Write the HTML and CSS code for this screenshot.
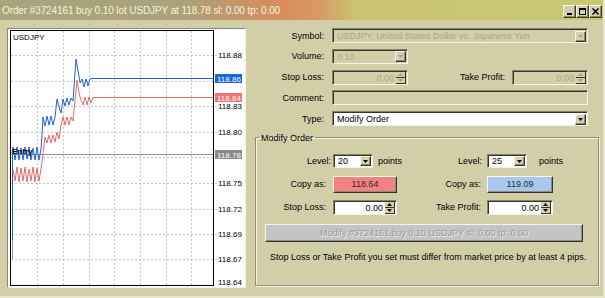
FILE: index.html
```html
<!DOCTYPE html>
<html lang="en">
<head>
    <meta charset="UTF-8">
    <meta name="viewport" content="width=device-width, initial-scale=1.0">
    <title>Order #3724161</title>
    <link rel="stylesheet" href="styles.css">
</head>
<body>
<div class="window">
    <div class="titlebar">
        <span class="title">Order #3724161 buy 0.10 lot USDJPY at 118.78 sl: 0.00 tp: 0.00</span>
        <div class="caption-buttons">
            <span class="cap-btn"><svg width="7" height="7" viewBox="0 0 7 7"><rect x="1" y="5" width="5" height="2" fill="#000"/></svg></span>
            <span class="cap-btn"><svg width="7" height="7" viewBox="0 0 7 7"><rect x="0.5" y="0.5" width="6" height="6" fill="none" stroke="#000"/><rect x="0" y="0" width="7" height="2" fill="#000"/></svg></span>
            <span class="cap-btn"><svg width="7" height="7" viewBox="0 0 7 7"><path d="M0.5 0.5 L6.5 6.5 M6.5 0.5 L0.5 6.5" stroke="#000" stroke-width="1.5"/></svg></span>
        </div>
    </div>

    <div class="client">
        <!-- chart -->
        <div class="chart-panel">
            <svg width="237" height="258" viewBox="0 0 237 258">
                <g stroke="#c6c6c6" stroke-dasharray="2 2" stroke-width="1">
                    <line x1="29.5" y1="2" x2="29.5" y2="256"/>
                    <line x1="55.5" y1="2" x2="55.5" y2="256"/>
                    <line x1="81.5" y1="2" x2="81.5" y2="256"/>
                    <line x1="106.5" y1="2" x2="106.5" y2="256"/>
                    <line x1="132.5" y1="2" x2="132.5" y2="256"/>
                    <line x1="158.5" y1="2" x2="158.5" y2="256"/>
                    <line x1="183.5" y1="2" x2="183.5" y2="256"/>
                    <line x1="3" y1="26.5" x2="209" y2="26.5"/>
                    <line x1="3" y1="52.5" x2="209" y2="52.5"/>
                    <line x1="3" y1="77.5" x2="209" y2="77.5"/>
                    <line x1="3" y1="103.5" x2="209" y2="103.5"/>
                    <line x1="3" y1="128.5" x2="209" y2="128.5"/>
                    <line x1="3" y1="154.5" x2="209" y2="154.5"/>
                    <line x1="3" y1="180.5" x2="209" y2="180.5"/>
                    <line x1="3" y1="205.5" x2="209" y2="205.5"/>
                    <line x1="3" y1="230.5" x2="209" y2="230.5"/>
                </g>
                <rect x="2.5" y="1.5" width="203" height="255" fill="none" stroke="#000"/>

                <text class="sym" x="5" y="11">USDJPY</text>

                <g class="axis">
                    <text x="210" y="29">118.88</text>
                    <text x="210" y="80">118.83</text>
                    <text x="210" y="106">118.80</text>
                    <text x="210" y="157">118.75</text>
                    <text x="210" y="183">118.72</text>
                    <text x="210" y="208">118.69</text>
                    <text x="210" y="233">118.67</text>
                    <text x="210" y="256">118.64</text>
                </g>

                <line x1="4.5" y1="124" x2="4.5" y2="211" stroke="#2a5cc8"/>
                <line x1="4.5" y1="211" x2="4.5" y2="230" stroke="#9a9a9a"/>

                <line x1="3" y1="125.5" x2="205" y2="125.5" stroke="#8c8c8c"/>

                <polyline fill="none" stroke="#e06c6c" points="5,140 7,152 9,138 11,153 13,139 15,152 17,138 19,153 21,140 23,152 25,138 27,153 29,139 31,152 33,140 35,125 37,108 39,114 41,106 43,114 45,106 47,113 49,103 51,110 53,96 55,88 57,96 59,88 61,96 63,88 65,92 69,51 71,64 73,71 75,76 77,68 79,76 81,68 83,74 85,68.5 205,68.5"/>
                <polyline fill="none" stroke="#2262d4" points="4,124 5,118 7,131 9,118 11,131 13,119 15,131 17,118 19,130 21,118 23,131 25,119 27,131 29,118 31,131 33,120 34,106 35,88 37,97 39,87 41,96 43,87 45,96 47,88 49,70 51,78 53,84 55,70 57,77 59,69 61,76 63,69 65,72 68,30 70,42 72,54 74,50 76,58 78,50 80,57 82,50 84,49.5 205,49.5"/>

                <text class="entry" x="4" y="125">Entry</text>

                <rect x="207" y="45" width="27" height="9" fill="#1a66dc"/>
                <text class="tag" x="209" y="53">118.86</text>
                <rect x="207" y="64" width="27" height="9" fill="#ee7474"/>
                <text class="tag" x="209" y="72">118.84</text>
                <rect x="207" y="121" width="27" height="9" fill="#8a8a8a"/>
                <text class="tag" x="209" y="129">118.78</text>
            </svg>
        </div>

        <!-- order form -->
        <div class="order-form">
            <div class="form-row">
                <label class="lbl">Symbol:</label>
                <div class="field combo disabled w-full">
                    <span class="value">USDJPY, United States Dollar vs. Japanese Yen</span>
                    <span class="drop-btn"><svg width="5" height="3" viewBox="0 0 5 3"><path d="M0 0h5L2.5 3z" fill="#a6a488"/></svg></span>
                </div>
            </div>
            <div class="form-row">
                <label class="lbl">Volume:</label>
                <div class="field combo disabled w-short">
                    <span class="value">0.10</span>
                    <span class="drop-btn"><svg width="5" height="3" viewBox="0 0 5 3"><path d="M0 0h5L2.5 3z" fill="#a6a488"/></svg></span>
                </div>
            </div>
            <div class="form-row">
                <label class="lbl">Stop Loss:</label>
                <div class="field spin disabled w-short">
                    <span class="value num">0.00</span>
                    <span class="spin-btns">
                        <span class="spin-btn"><svg width="5" height="3" viewBox="0 0 5 3"><path d="M0 3h5L2.5 0z" fill="#a6a488"/></svg></span>
                        <span class="spin-btn"><svg width="5" height="3" viewBox="0 0 5 3"><path d="M0 0h5L2.5 3z" fill="#a6a488"/></svg></span>
                    </span>
                </div>
                <label class="lbl lbl-tp">Take Profit:</label>
                <div class="field spin disabled w-tp">
                    <span class="value num">0.00</span>
                    <span class="spin-btns">
                        <span class="spin-btn"><svg width="5" height="3" viewBox="0 0 5 3"><path d="M0 3h5L2.5 0z" fill="#a6a488"/></svg></span>
                        <span class="spin-btn"><svg width="5" height="3" viewBox="0 0 5 3"><path d="M0 0h5L2.5 3z" fill="#a6a488"/></svg></span>
                    </span>
                </div>
            </div>
            <div class="form-row">
                <label class="lbl">Comment:</label>
                <div class="field disabled w-full"></div>
            </div>
            <div class="form-row">
                <label class="lbl">Type:</label>
                <div class="field combo white w-full">
                    <span class="value">Modify Order</span>
                    <span class="drop-btn"><svg width="5" height="3" viewBox="0 0 5 3"><path d="M0 0h5L2.5 3z" fill="#000"/></svg></span>
                </div>
            </div>

            <fieldset class="group">
                <legend>Modify Order</legend>
                <div class="grp-row row-level">
                    <label class="g-lbl tight">Level:</label>
                    <div class="g-ctl">
                        <div class="field combo white w-level">
                            <span class="value">20</span>
                            <span class="drop-btn"><svg width="5" height="3" viewBox="0 0 5 3"><path d="M0 0h5L2.5 3z" fill="#000"/></svg></span>
                        </div>
                        <span class="points">points</span>
                    </div>
                    <label class="g-lbl2 tight">Level:</label>
                    <div class="g-ctl">
                        <div class="field combo white w-level">
                            <span class="value">25</span>
                            <span class="drop-btn"><svg width="5" height="3" viewBox="0 0 5 3"><path d="M0 0h5L2.5 3z" fill="#000"/></svg></span>
                        </div>
                        <span class="points points-right">points</span>
                    </div>
                </div>
                <div class="grp-row row-copy">
                    <label class="g-lbl">Copy as:</label>
                    <div class="g-ctl">
                        <button class="copy-btn sell">118.64</button>
                    </div>
                    <label class="g-lbl2">Copy as:</label>
                    <div class="g-ctl">
                        <button class="copy-btn buy">119.09</button>
                    </div>
                </div>
                <div class="grp-row row-stops">
                    <label class="g-lbl">Stop Loss:</label>
                    <div class="g-ctl">
                        <div class="field spin white w-sl">
                            <span class="value num">0.00</span>
                            <span class="spin-btns">
                                <span class="spin-btn"><svg width="5" height="3" viewBox="0 0 5 3"><path d="M0 3h5L2.5 0z" fill="#000"/></svg></span>
                                <span class="spin-btn"><svg width="5" height="3" viewBox="0 0 5 3"><path d="M0 0h5L2.5 3z" fill="#000"/></svg></span>
                            </span>
                        </div>
                    </div>
                    <label class="g-lbl2">Take Profit:</label>
                    <div class="g-ctl">
                        <div class="field spin white w-tp2">
                            <span class="value num">0.00</span>
                            <span class="spin-btns">
                                <span class="spin-btn"><svg width="5" height="3" viewBox="0 0 5 3"><path d="M0 3h5L2.5 0z" fill="#000"/></svg></span>
                                <span class="spin-btn"><svg width="5" height="3" viewBox="0 0 5 3"><path d="M0 0h5L2.5 3z" fill="#000"/></svg></span>
                            </span>
                        </div>
                    </div>
                </div>
                <button class="modify-btn" disabled>Modify #3724161 buy 0.10 USDJPY sl: 0.00 tp: 0.00</button>
                <p class="message">Stop Loss or Take Profit you set must differ from market price by at least 4 pips.</p>
            </fieldset>
        </div>
    </div>
</div>
</body>
</html>
```

FILE: styles.css
```css
body {
    margin: 0;
    background: #d2cfa8;
    font-family: "Liberation Sans", Arial, sans-serif;
    font-size: 9px;
    color: #000;
}

.window {
    width: 605px;
    height: 298px;
    box-sizing: border-box;
    background: #d2cfa8;
    border-right: 2px solid #e9e7cc;
    border-bottom: 2px solid #e9e7cc;
    overflow: hidden;
}

/* title bar */
.titlebar {
    height: 20px;
    display: flex;
    align-items: center;
    justify-content: space-between;
    padding: 0 1px 0 2px;
    background: linear-gradient(to right, #a8a57c 0%, #aba27a 30%, #c79468 40%, #da8c5e 47%, #d99a64 53%, #cbc472 59%, #c9c871 100%);
}

.title {
    color: #f5f3df;
    font-size: 10px;
    letter-spacing: -0.1px;
}

.caption-buttons {
    display: flex;
    margin-top: 3px;
}

.cap-btn {
    width: 11px;
    height: 11px;
    display: flex;
    align-items: center;
    justify-content: center;
    background: #d4d1ac;
    border: 1px solid;
    border-color: #fbfae8 #3c3a2c #3c3a2c #fbfae8;
    box-shadow: inset -1px -1px 0 #8c8a70;
}

.client {
    display: flex;
    padding: 8px 0 0 7px;
}

/* chart */
.chart-panel {
    width: 237px;
    height: 258px;
    border: 1px solid;
    border-color: #8c8a70 #f4f2e0 #f4f2e0 #8c8a70;
    background: #fff;
}

.chart-panel svg {
    display: block;
    font-family: "Liberation Sans", Arial, sans-serif;
}

.chart-panel .sym,
.chart-panel .axis text {
    font-size: 8px;
    fill: #000;
}

.chart-panel .entry {
    font-size: 8px;
    font-weight: bold;
    fill: #000;
}

.chart-panel .tag {
    font-size: 8px;
    fill: #fff;
}

/* form */
.order-form {
    margin-left: 4px;
    width: 350px;
    display: flex;
    flex-direction: column;
}

.form-row {
    display: flex;
    align-items: center;
    height: 15px;
    margin-bottom: 5.75px;
}

.lbl {
    width: 74px;
    margin-right: 8px;
    text-align: right;
}

.lbl-tp {
    width: 97px;
    margin-right: 7px;
}

.field {
    height: 15px;
    box-sizing: border-box;
    display: flex;
    align-items: center;
    border: 1px solid;
    border-color: #84826a #f6f4e2 #f6f4e2 #84826a;
    box-shadow: inset 1px 1px 0 #35342a;
    background: #d2cfa8;
    padding: 1px 1px 0 2px;
}

.field.white {
    background: #fff;
}

.field .value {
    flex: 1;
    padding-left: 2px;
    white-space: nowrap;
    overflow: hidden;
}

.field.disabled .value {
    color: #a9a78a;
}

.field .value.num {
    text-align: right;
    padding-right: 2px;
}

.w-full {
    width: 256px;
}

.w-short {
    width: 76px;
}

.w-tp {
    width: 76px;
}

.drop-btn {
    width: 11px;
    height: 11px;
    box-sizing: border-box;
    display: flex;
    align-items: center;
    justify-content: center;
    background: #d4d1ac;
    border: 1px solid;
    border-color: #f6f4e2 #35342a #35342a #f6f4e2;
    box-shadow: inset -1px -1px 0 #8c8a70;
}

.spin-btns {
    display: flex;
    flex-direction: column;
    width: 10px;
    height: 12px;
}

.spin-btn {
    flex: 1;
    display: flex;
    align-items: center;
    justify-content: center;
    background: #d4d1ac;
    border: 1px solid;
    border-color: #f6f4e2 #35342a #35342a #f6f4e2;
    border-width: 0 1px 1px 0;
}

/* modify group */
.group {
    margin: 1px 0 0 5px;
    padding: 0;
    width: 344px;
    height: 153px;
    box-sizing: border-box;
    border: 1px solid #8f8d72;
    box-shadow: inset 1px 1px 0 #f4f2e0, 1px 1px 0 #f4f2e0;
}

.group legend {
    margin-left: 3px;
    padding: 0 2px;
    font-size: 9px;
}

.grp-row {
    display: flex;
    align-items: center;
}

.row-level {
    margin-top: 11px;
    height: 14px;
}

.row-copy {
    margin-top: 8px;
    height: 17px;
}

.row-stops {
    margin-top: 7px;
    height: 15px;
}

.g-lbl {
    width: 77px;
    padding-right: 7px;
    box-sizing: border-box;
    text-align: right;
}

.g-lbl2 {
    width: 72px;
    padding-right: 6px;
    box-sizing: border-box;
    text-align: right;
}

.g-lbl.tight {
    padding-right: 2px;
}

.g-lbl2.tight {
    padding-right: 5px;
}

.g-ctl {
    width: 82px;
    display: flex;
    align-items: center;
}

.w-level {
    width: 40px;
    height: 14px;
}

.w-level .drop-btn {
    height: 10px;
}

.points {
    margin-left: 5px;
}

.points-right {
    margin-left: 12px;
}

.w-sl {
    width: 64px;
}

.w-tp2 {
    width: 66px;
}

.copy-btn {
    height: 17px;
    padding: 0;
    font-family: inherit;
    font-size: 9px;
    border: 1px solid;
    border-color: #fbfaf0 #35342a #35342a #fbfaf0;
    box-shadow: inset -1px -1px 0 #8c8a70;
}

.copy-btn.sell {
    width: 64px;
    background: #f28282;
    color: #402222;
}

.copy-btn.buy {
    width: 66px;
    background: #a8c8f0;
    color: #1c2a48;
}

.modify-btn {
    display: block;
    margin: 9px 0 0 9px;
    width: 318px;
    height: 18px;
    padding: 0;
    font-family: inherit;
    font-size: 9px;
    color: #9a9a9a;
    text-shadow: 1px 1px 0 #ececec;
    background: #c4c4c4;
    border: 1px solid;
    border-color: #f4f4f4 #35342a #35342a #f4f4f4;
    box-shadow: inset -1px -1px 0 #8a8a8a;
}

.message {
    margin: 10px 0 0 14px;
    line-height: 10px;
}
```
